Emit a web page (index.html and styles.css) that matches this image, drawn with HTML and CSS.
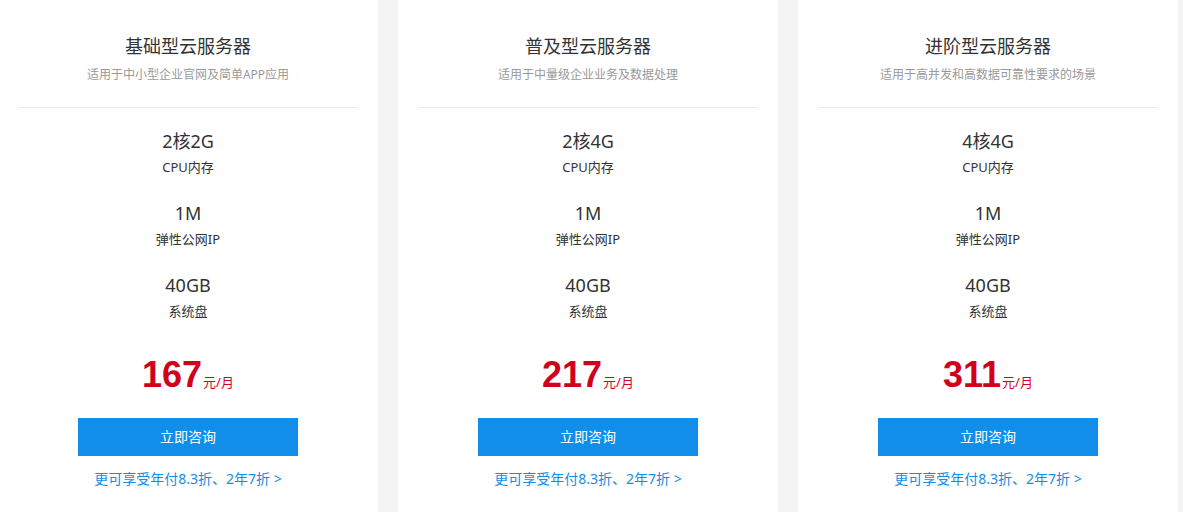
FILE: index.html
```html
<!DOCTYPE html>
<html lang="zh-CN">
<head>
<meta charset="utf-8">
<title>云服务器</title>
<link rel="stylesheet" href="styles.css">
</head>
<body>
<div class="row">
  <div class="card">
    <div class="head">
      <div class="title">基础型云服务器</div>
      <div class="desc">适用于中小型企业官网及简单APP应用</div>
    </div>
    <div class="specs">
      <div class="spec"><div class="val">2核2G</div><div class="lbl">CPU内存</div></div>
      <div class="spec"><div class="val">1M</div><div class="lbl">弹性公网IP</div></div>
      <div class="spec"><div class="val">40GB</div><div class="lbl">系统盘</div></div>
    </div>
    <div class="price"><span class="num">167</span><span class="unit">元/月</span></div>
    <a class="btn">立即咨询</a>
    <a class="more">更可享受年付8.3折、2年7折 &gt;</a>
  </div>
  <div class="card">
    <div class="head">
      <div class="title">普及型云服务器</div>
      <div class="desc">适用于中量级企业业务及数据处理</div>
    </div>
    <div class="specs">
      <div class="spec"><div class="val">2核4G</div><div class="lbl">CPU内存</div></div>
      <div class="spec"><div class="val">1M</div><div class="lbl">弹性公网IP</div></div>
      <div class="spec"><div class="val">40GB</div><div class="lbl">系统盘</div></div>
    </div>
    <div class="price"><span class="num">217</span><span class="unit">元/月</span></div>
    <a class="btn">立即咨询</a>
    <a class="more">更可享受年付8.3折、2年7折 &gt;</a>
  </div>
  <div class="card">
    <div class="head">
      <div class="title">进阶型云服务器</div>
      <div class="desc">适用于高并发和高数据可靠性要求的场景</div>
    </div>
    <div class="specs">
      <div class="spec"><div class="val">4核4G</div><div class="lbl">CPU内存</div></div>
      <div class="spec"><div class="val">1M</div><div class="lbl">弹性公网IP</div></div>
      <div class="spec"><div class="val">40GB</div><div class="lbl">系统盘</div></div>
    </div>
    <div class="price"><span class="num">311</span><span class="unit">元/月</span></div>
    <a class="btn">立即咨询</a>
    <a class="more">更可享受年付8.3折、2年7折 &gt;</a>
  </div>
</div>
</body>
</html>
```
FILE: styles.css
```css
html, body {
  margin: 0;
  padding: 0;
  background: #f4f4f4;
  overflow: hidden;
}
body {
  font-family: "Noto Sans", "Noto Sans CJK SC", sans-serif;
  color: #333;
}
.row {
  display: flex;
  gap: 20px;
  margin-left: -2px;
}
.card {
  flex: 0 0 380px;
  box-sizing: border-box;
  height: 530px;
  background: #fff;
  padding: 0 20px;
  text-align: center;
  display: flex;
  flex-direction: column;
  align-items: center;
}
.head {
  align-self: stretch;
  padding-top: 33px;
  padding-bottom: 22px;
  border-bottom: 1px solid #ebebeb;
}
.title {
  font-size: 18px;
  line-height: 26px;
  color: #333;
}
.desc {
  margin-top: 6px;
  font-size: 12px;
  line-height: 20px;
  color: #999;
}
.specs {
  padding-top: 20px;
  display: flex;
  flex-direction: column;
  gap: 23px;
}
.val {
  font-size: 18px;
  line-height: 26px;
  color: #333;
}
.lbl {
  margin-top: 3px;
  font-size: 13px;
  line-height: 20px;
  color: #333;
}
.price {
  margin-top: 34px;
  height: 40px;
  display: flex;
  align-items: baseline;
  justify-content: center;
  color: #d0021b;
}
.num {
  font-family: "Liberation Sans", Arial, sans-serif;
  font-weight: bold;
  font-size: 36px;
  line-height: 40px;
}
.unit {
  font-size: 13px;
  line-height: 1;
  margin-left: 1px;
}
.btn {
  margin-top: 23px;
  width: 220px;
  height: 38px;
  line-height: 38px;
  background: #118ee9;
  color: #fff;
  font-size: 14px;
  display: block;
}
.more {
  margin-top: 13px;
  font-size: 14px;
  line-height: 20px;
  color: #118ee9;
  display: block;
}
```
